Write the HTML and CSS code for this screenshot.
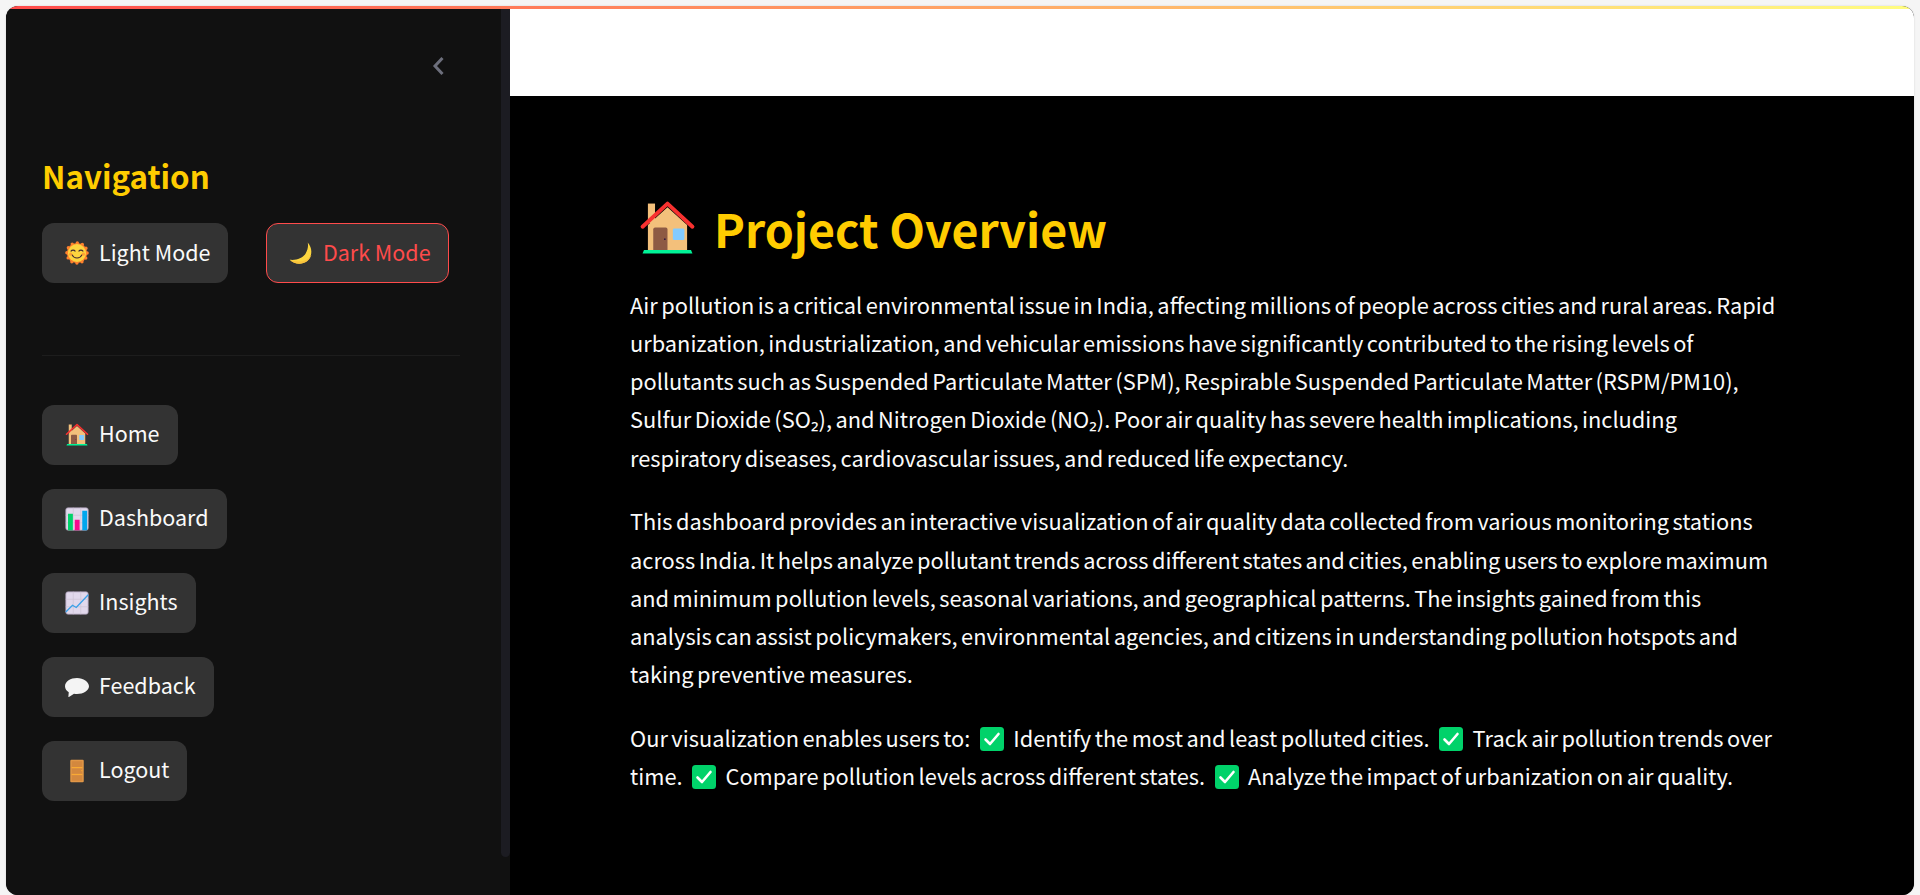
FILE: index.html
```html
<!DOCTYPE html>
<html lang="en">
<head>
  <meta charset="UTF-8">
  <meta name="viewport" content="width=device-width, initial-scale=1.0">
  <title>Project Overview</title>
  <link rel="stylesheet" href="styles.css">
</head>
<body>
  <svg class="defs" aria-hidden="true">
    <symbol id="house" viewBox="0 0 32 32">
      <rect x="5" y="2" width="4" height="11" fill="#f3c07b"/>
      <path d="M5 14 16 4l11 10v14H5z" fill="#f3c07b"/>
      <path d="M2 15 16 2l14 13" fill="none" stroke="#f8312f" stroke-width="2.2" stroke-linecap="round" stroke-linejoin="round"/>
      <path d="M8 16.5a1 1 0 0 1 1-1h6a1 1 0 0 1 1 1V28H8z" fill="#8d5a44"/>
      <rect x="19" y="16" width="6.500" height="6.500" rx=".8" fill="#83cbff"/>
      <circle cx="14.500" cy="22" r=".5" fill="#321b41"/>
      <path d="M2.800 28h26.400L30 30H2z" fill="#00f397"/>
    </symbol>
    <symbol id="check" viewBox="0 0 24 24">
      <rect x="0" y="0" width="24" height="24" rx="3.500" fill="#00d26a"/>
      <path d="M5.500 12.500 10 17l8.500-10" fill="none" stroke="#fff" stroke-width="2.600" stroke-linecap="round" stroke-linejoin="round"/>
    </symbol>
  </svg>

  <div class="frame">
    <div class="topbar"></div>
    <div class="layout">
      <aside class="sidebar">
        <div class="sidebar-inner">
          <div class="collapse-row">
            <svg class="chevron" viewBox="0 0 12 20"><path d="M10 2 2.500 10 10 18" fill="none" stroke="#6d6f7c" stroke-width="3"/></svg>
          </div>
          <h3 class="nav-title">Navigation</h3>
          <div class="mode-row">
            <button class="btn">
              <svg class="emoji" viewBox="0 0 32 32">
                <circle cx="16" cy="16" r="13.500" fill="#ff822d"/>
                <circle cx="16" cy="16" r="13.500" fill="none" stroke="#ff822d" stroke-width="4.500" stroke-linecap="round" stroke-dasharray="0 7.070"/>
                <circle cx="16" cy="16" r="12" fill="#fcd53f"/>
                <path d="M8 13.500c1.200-1.800 4.300-1.800 5.500 0M18.500 13.500c1.200-1.800 4.300-1.800 5.500 0" fill="none" stroke="#402a32" stroke-width="1.400" stroke-linecap="round"/>
                <path d="M9.500 18.500c2.500 5.500 10.500 5.500 13 0" fill="none" stroke="#402a32" stroke-width="1.500" stroke-linecap="round"/>
                <circle cx="7.500" cy="17.500" r="2.200" fill="#ff822d" opacity=".6"/>
                <circle cx="24.500" cy="17.500" r="2.200" fill="#ff822d" opacity=".6"/>
              </svg>
              <span>Light Mode</span>
            </button>
            <button class="btn btn-active">
              <svg class="emoji" viewBox="0 0 32 32">
                <path d="M25 2C32 10 31 21 24 27 17 32 7 31 1 25 10 26 18 23 22 17 25 12 26 7 25 2z" fill="#fcd53f"/>
                <path d="M1 25c6 6 16 7 23 2 3-2.500 5-5.500 6-9-2 4-5 6.500-9 8-6 2.200-14 1.500-20-1z" fill="#f9c23c"/>
              </svg>
              <span>Dark Mode</span>
            </button>
          </div>
          <hr class="divider">
          <nav class="nav-list">
            <button class="btn">
              <svg class="emoji"><use href="#house"/></svg>
              <span>Home</span>
            </button>
            <button class="btn">
              <svg class="emoji" viewBox="0 0 32 32">
                <rect x="1" y="1" width="30" height="30" rx="3" fill="#e1d8ec" stroke="#998ea4" stroke-width="1"/>
                <path d="M11 1v30M21 1v30M1 11h30M1 21h30" stroke="#cdc4d6" stroke-width="1"/>
                <rect x="4" y="9" width="6.500" height="22" fill="#00d26a"/>
                <rect x="13" y="17" width="6.500" height="14" fill="#f70a8d"/>
                <rect x="23" y="5" width="6.500" height="26" fill="#00a6ed"/>
              </svg>
              <span>Dashboard</span>
            </button>
            <button class="btn">
              <svg class="emoji" viewBox="0 0 32 32">
                <rect x="1" y="1" width="30" height="30" rx="3" fill="#e1d8ec" stroke="#998ea4" stroke-width="1"/>
                <path d="M11 1v30M21 1v30M1 11h30M1 21h30" stroke="#cdc4d6" stroke-width="1"/>
                <path d="M1 28 10 19l5 3L31 5" fill="none" stroke="#3aa0e8" stroke-width="1.800"/>
              </svg>
              <span>Insights</span>
            </button>
            <button class="btn">
              <svg class="emoji" viewBox="0 0 32 32">
                <path d="M16 4C7.500 4 0 8.500 0 15c0 3.500 2 6.200 5 8l-.5 5.500c0 .8.700 1 1.300.6L12 25c1.300.2 2.600.3 4 .3 8.500 0 16-4.500 16-10.300S24.500 4 16 4z" fill="#f4f4f4"/>
              </svg>
              <span>Feedback</span>
            </button>
            <button class="btn">
              <svg class="emoji" viewBox="0 0 32 32">
                <rect x="7" y="1" width="18" height="30" rx="1.500" fill="#e19747"/>
                <path d="M9 11.500h14M9 20.500h14" stroke="#ffb02e" stroke-width="1.200"/>
                <path d="M9 3h14v7.500H9zM9 12.500h14v7H9zM9 21.500h14V29H9z" fill="#d3883e"/>
                <circle cx="22.500" cy="15.500" r=".8" fill="#ffb02e"/>
              </svg>
              <span>Logout</span>
            </button>
          </nav>
        </div>
        <div class="scrollbar"></div>
      </aside>

      <div class="content">
        <header class="app-header"></header>
        <main class="main">
          <h1 class="page-title">
            <svg class="title-icon"><use href="#house"/></svg>
            <span>Project Overview</span>
          </h1>
          <p>Air pollution is a critical environmental issue in India, affecting millions of people across cities and rural areas. Rapid urbanization, industrialization, and vehicular emissions have significantly contributed to the rising levels of pollutants such as Suspended Particulate Matter (SPM), Respirable Suspended Particulate Matter (RSPM/PM10), Sulfur Dioxide (SO₂), and Nitrogen Dioxide (NO₂). Poor air quality has severe health implications, including respiratory diseases, cardiovascular issues, and reduced life expectancy.</p>
          <p>This dashboard provides an interactive visualization of air quality data collected from various monitoring stations across India. It helps analyze pollutant trends across different states and cities, enabling users to explore maximum and minimum pollution levels, seasonal variations, and geographical patterns. The insights gained from this analysis can assist policymakers, environmental agencies, and citizens in understanding pollution hotspots and taking preventive measures.</p>
          <p>Our visualization enables users to: <svg class="check"><use href="#check"/></svg> Identify the most and least polluted cities. <svg class="check"><use href="#check"/></svg> Track air pollution trends over time. <svg class="check"><use href="#check"/></svg> Compare pollution levels across different states. <svg class="check"><use href="#check"/></svg> Analyze the impact of urbanization on air quality.</p>
        </main>
      </div>
    </div>
  </div>
</body>
</html>
```

FILE: styles.css
```css
* {
  box-sizing: border-box;
}
html, body {
  height: 100%;
}
body {
  margin: 0;
  padding: 6px 6px 0 6px;
  background: #f5f5f5;
  font-family: "Noto Sans CJK SC", "Noto Sans", sans-serif;
  color: #fafafa;
  overflow: hidden;
}
.defs {
  display: none;
}
.frame {
  height: 889px;
  border-radius: 12px;
  overflow: hidden;
  display: flex;
  flex-direction: column;
  background: #000;
  box-shadow: 0 0 2px rgba(0,0,0,0.15);
}
.topbar {
  height: 3px;
  flex: none;
  background: linear-gradient(90deg, #ff4b4b, #fffd80);
}
.layout {
  flex: 1;
  display: flex;
  min-height: 0;
}
.sidebar {
  width: 504px;
  flex: none;
  display: flex;
  background: #111;
}
.sidebar-inner {
  flex: 1;
  padding: 0 41px 0 36px;
}
.collapse-row {
  height: 87px;
  padding: 47px 0 0 390px;
}
.chevron {
  display: block;
  width: 13px;
  height: 20px;
}
.nav-title {
  margin: 59px 0 0 0;
  color: #ffcc00;
  font-size: 31.3px;
  font-weight: 600;
  line-height: 42px;
}
.mode-row {
  display: flex;
  gap: 38px;
  margin-top: 26px;
}
.btn {
  display: inline-flex;
  align-items: center;
  gap: 10px;
  height: 60px;
  padding: 0 18px 0 23px;
  background: #333;
  border: 0;
  border-radius: 12px;
  color: #fafafa;
  font-family: inherit;
  font-size: 21.5px;
  line-height: 1;
  white-space: nowrap;
}
.btn span {
  padding-bottom: 4px;
}
.mode-row .btn span {
  padding-bottom: 3px;
}
.btn-active {
  padding: 0 17px 0 21.5px;
  border: 1.5px solid #ff4b4b;
  color: #ff4b4b;
}
.emoji {
  width: 24px;
  height: 24px;
  flex: none;
}
.divider {
  margin: 72px 0 49px 0;
  border: 0;
  border-top: 1.5px solid #1d1d1d;
}
.nav-list {
  display: flex;
  flex-direction: column;
  align-items: flex-start;
  gap: 24px;
}
.scrollbar {
  width: 9px;
  height: 848px;
  background: #1c1c22;
  border-radius: 0 0 5px 5px;
}
.content {
  flex: 1;
  display: flex;
  flex-direction: column;
  min-width: 0;
}
.app-header {
  height: 87px;
  flex: none;
  background: #fff;
}
.main {
  flex: 1;
  padding: 96px 135px 0 120px;
  background: #000;
}
.page-title {
  display: flex;
  align-items: center;
  gap: 18px;
  margin: 0 0 21.5px 0;
  padding-left: 9px;
  color: #ffcc00;
  font-size: 46.5px;
  font-weight: 600;
  line-height: 72px;
}
.title-icon {
  width: 57px;
  height: 57px;
  flex: none;
}
.main p {
  margin: 0 0 25.5px 0;
  font-size: 21.8px;
  line-height: 38.25px;
  word-spacing: -1.4px;
}
.check {
  width: 24px;
  height: 24px;
  margin: 0 6px;
  vertical-align: -4px;
}
```
